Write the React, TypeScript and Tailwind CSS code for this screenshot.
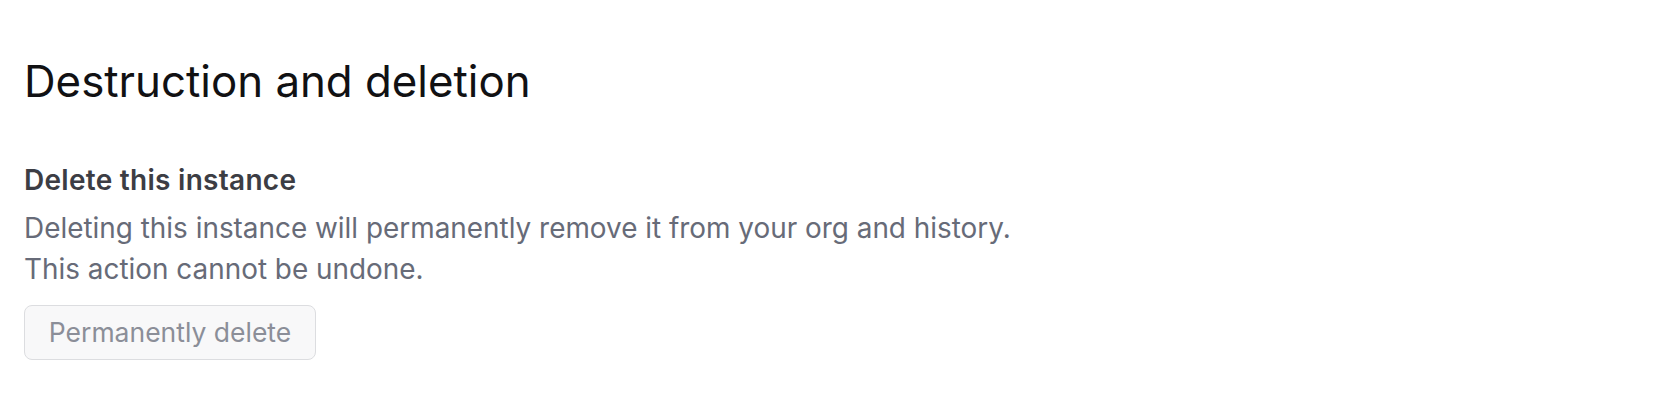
export default function App() {
  return (
    <div className="min-h-screen bg-white px-[24px] pt-[56px] font-['Inter',sans-serif]">
      <h1 className="text-[43.8px] leading-[52px] font-normal text-[#111113]">
        Destruction and deletion
      </h1>

      <section className="mt-[54px]">
        <h2 className="text-[28px] leading-[36px] font-semibold tracking-[0.01em] text-[#3c3d44]">
          Delete this instance
        </h2>
        <p className="mt-[10px] text-[27.9px] leading-[41px] text-[#676b78]">
          Deleting this instance will permanently remove it from your org and history.
          <br />
          This action cannot be undone.
        </p>
        <button
          disabled
          className="mt-[15px] h-[55px] w-[292px] rounded-lg border border-[#dcdde0] bg-[#f8f8f9] text-[26.5px] text-[#8b8e98]"
        >
          Permanently delete
        </button>
      </section>
    </div>
  );
}
